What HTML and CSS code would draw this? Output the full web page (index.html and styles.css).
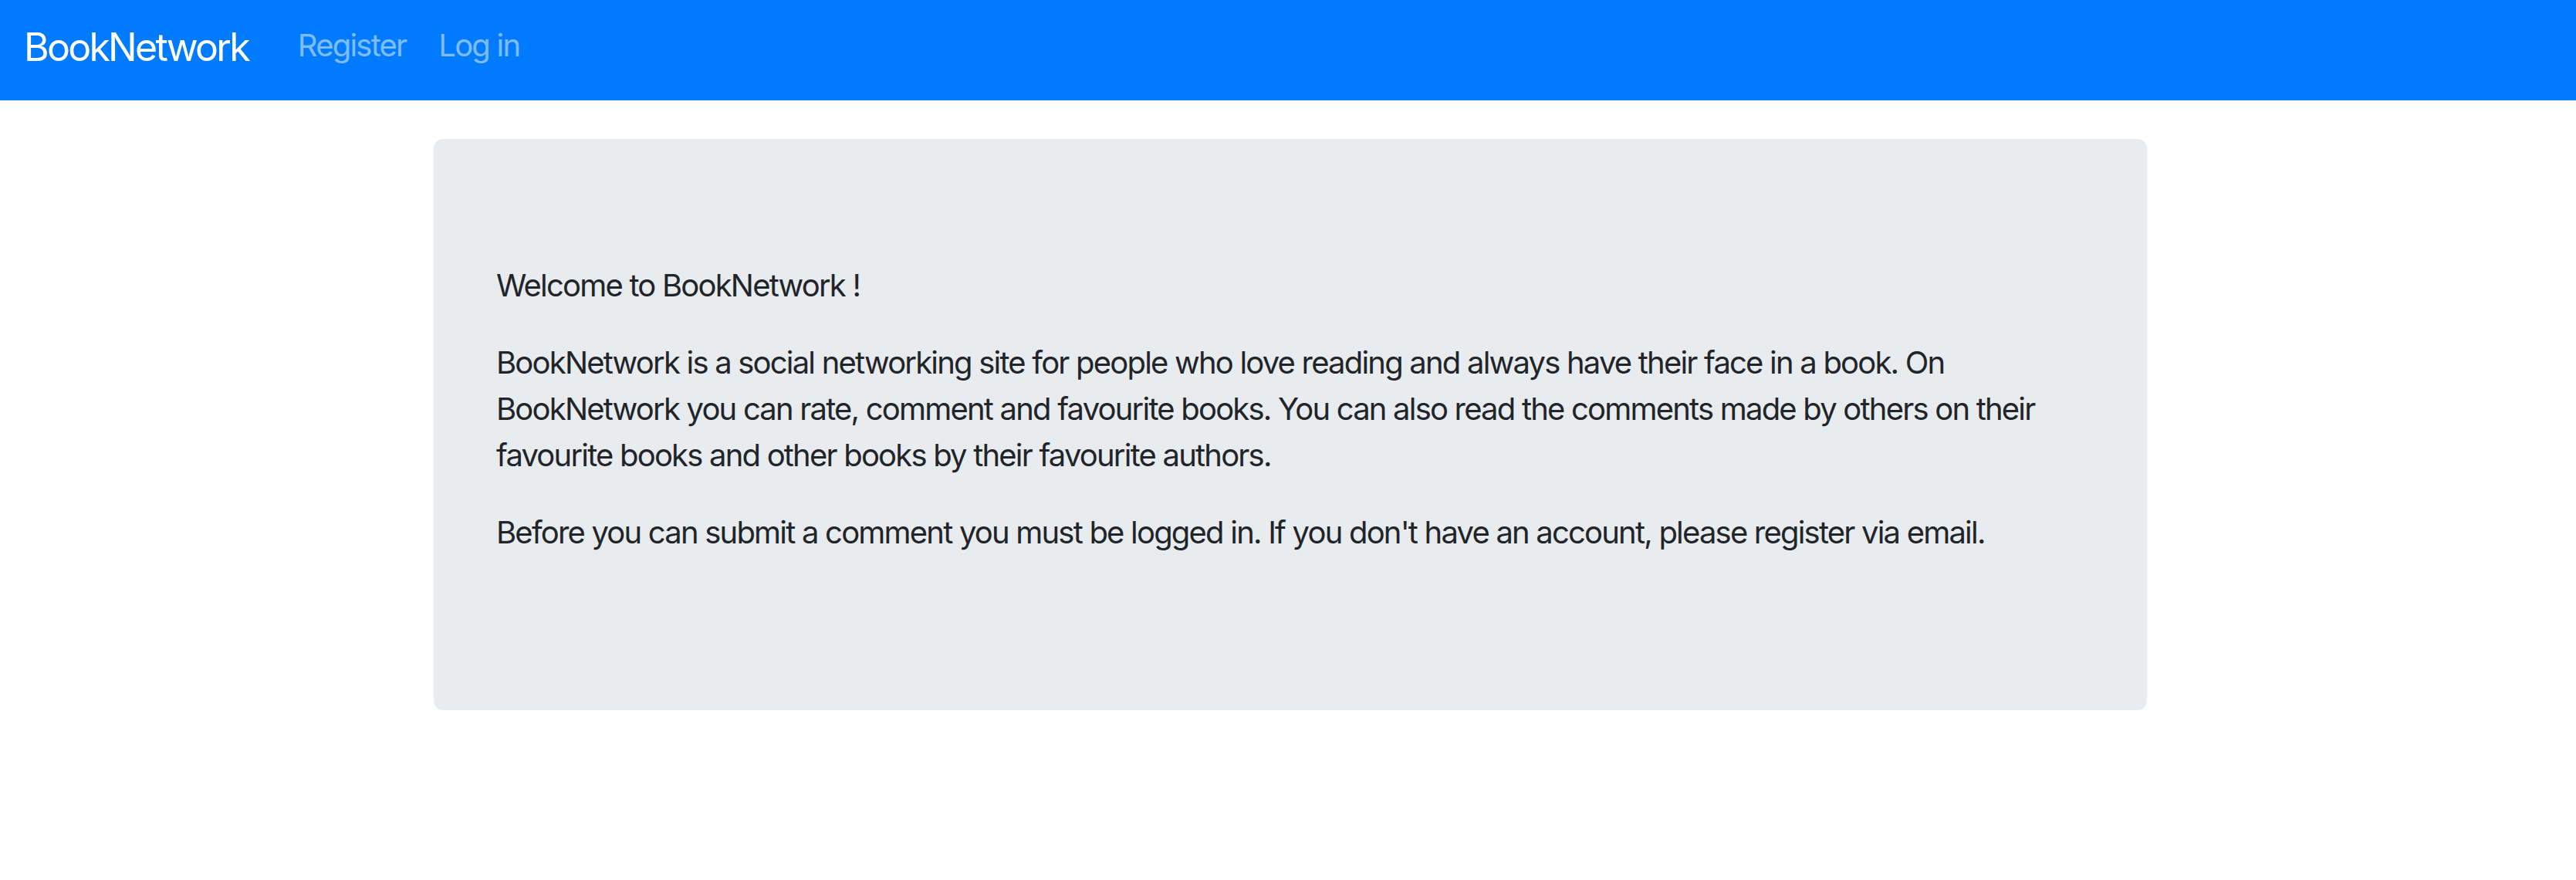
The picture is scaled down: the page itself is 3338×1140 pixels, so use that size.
FILE: index.html
```html
<!DOCTYPE html>
<html lang="en">
<head>
<meta charset="utf-8">
<title>BookNetwork</title>
<link rel="stylesheet" href="styles.css">
</head>
<body>
<nav class="navbar">
  <a class="brand" href="#">BookNetwork</a>
  <ul class="nav">
    <li><a class="nav-link" href="#">Register</a></li>
    <li><a class="nav-link" href="#">Log in</a></li>
  </ul>
</nav>
<main class="main">
  <section class="jumbotron">
    <p>Welcome to BookNetwork !</p>
    <p>BookNetwork is a social networking site for people who love reading and always have their face in a book. On BookNetwork you can rate, comment and favourite books. You can also read the comments made by others on their favourite books and other books by their favourite authors.</p>
    <p>Before you can submit a comment you must be logged in. If you don't have an account, please register via email.</p>
  </section>
</main>
</body>
</html>
```
FILE: styles.css
```css
* { box-sizing: border-box; }
html, body { margin: 0; padding: 0; }
body {
  font-family: Inter, "Liberation Sans", Arial, sans-serif;
  font-size: 40px;
  line-height: 60px;
  letter-spacing: -0.045em;
  color: #212529;
  background: #fff;
}
.navbar {
  display: flex;
  align-items: flex-start;
  background: #007bff;
  padding: 0 31px;
  height: 130px;
}
.brand {
  color: #fff;
  text-decoration: none;
  font-size: 50px;
  line-height: 75px;
  letter-spacing: -0.055em;
  margin-top: 24px;
  margin-right: 43px;
  white-space: nowrap;
}
.nav {
  display: flex;
  list-style: none;
  margin: 29px 0 0;
  padding: 0;
}
.nav-link {
  display: block;
  color: rgba(255, 255, 255, 0.5);
  text-decoration: none;
  padding: 0 21px;
  line-height: 60px;
  white-space: nowrap;
}
.main {
  width: 2220px;
  margin: 50px 0 0 calc(50% - 1107px);
}
.jumbotron {
  background: #e9ecef;
  border-radius: 12px;
  padding: 160px 81px;
}
.jumbotron p {
  margin: 0 0 40px;
}
```
